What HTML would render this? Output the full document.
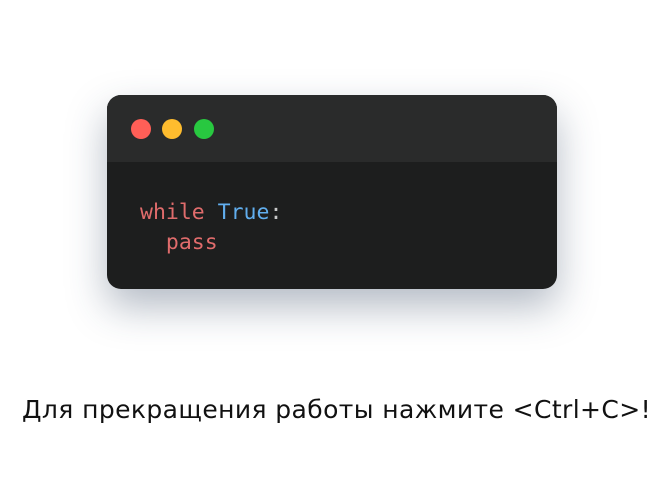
<!DOCTYPE html>
<html><head><meta charset="utf-8"><style>
body{margin:0;width:661px;height:479px;background:#fff;position:relative;overflow:hidden}
.card{position:absolute;left:107px;top:95px;width:450px;height:194px;border-radius:14px;background:#1d1e1e;overflow:hidden;box-shadow:0 18px 40px rgba(40,60,90,.35)}
.hd{height:67px;background:#2a2b2b;position:relative}
.d{position:absolute;top:24px;width:20px;height:20px;border-radius:50%}
.code{position:absolute;left:33px;top:103px;font-family:"DejaVu Sans Mono",monospace;font-size:21.5px;line-height:30px;color:#e06c6c;white-space:pre}
.b{color:#61aeee}.w{color:#c8c8c8}
.t{position:absolute;left:22px;top:395px;width:640px;font-family:"DejaVu Sans","Liberation Sans",sans-serif;font-size:25px;color:#111;white-space:nowrap;letter-spacing:0.4px}
</style></head><body>
<div class="card"><div class="hd">
<div class="d" style="left:24px;background:#ff5f57"></div>
<div class="d" style="left:55px;background:#febc2e"></div>
<div class="d" style="left:87px;background:#28c840"></div></div>
<div class="code">while <span class="b">True</span><span class="w">:</span>
  pass</div></div>
<div class="t">Для прекращения работы нажмите &lt;Ctrl+C&gt;!</div>
</body></html>
